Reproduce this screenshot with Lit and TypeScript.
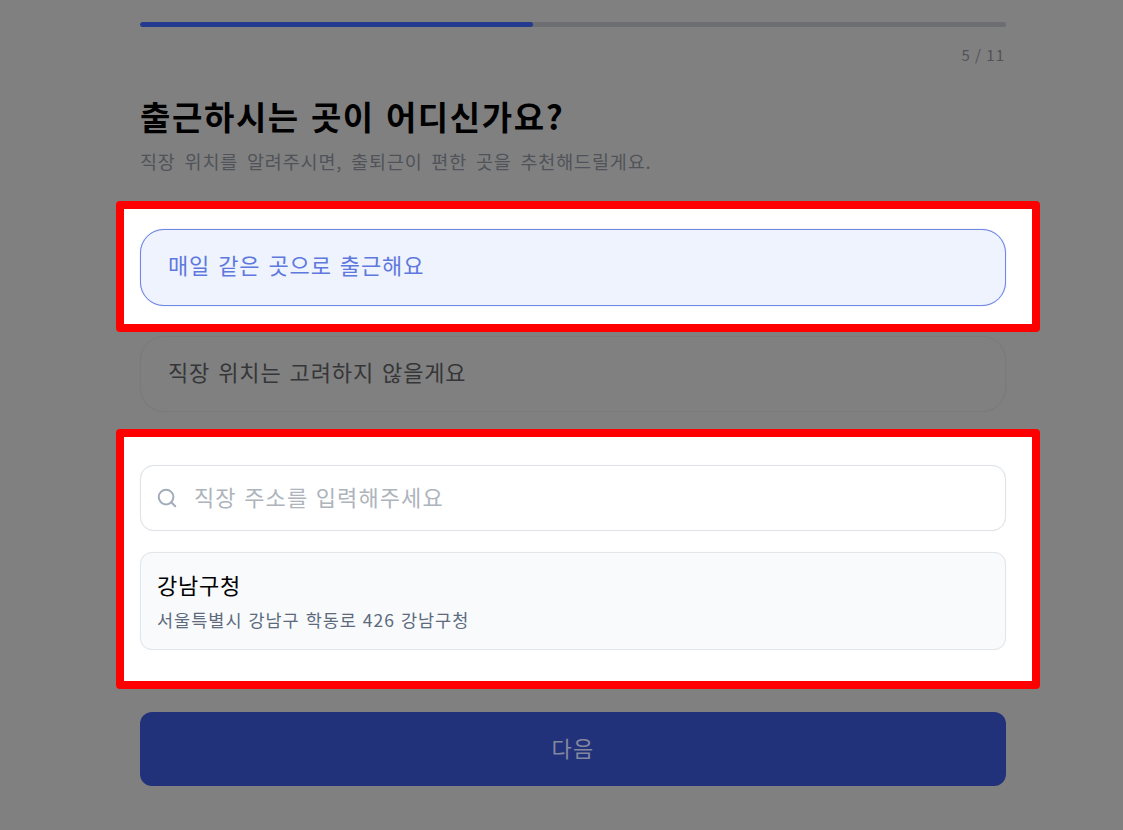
import { LitElement, html, css } from "lit";
import { customElement } from "lit/decorators.js";

@customElement("app-root")
export class AppRoot extends LitElement {
  static styles = css`
    :host {
      display: block;
      width: 1123px;
      height: 830px;
      overflow: hidden;
      background: #808080;
      font-family: "Noto Sans CJK KR", "Noto Sans", sans-serif;
    }
    .page {
      width: 866px;
      margin-left: 140px;
      padding-top: 22px;
      display: flex;
      flex-direction: column;
    }
    .track {
      height: 5px;
      border-radius: 3px;
      background: #6c6e71;
      overflow: hidden;
    }
    .fill {
      height: 100%;
      border-radius: 3px;
      background: #233a8e;
    }
    .count {
      margin-top: 17px;
      padding-right: 1px;
      height: 22px;
      line-height: 22px;
      text-align: right;
      font-size: 15px;
      letter-spacing: 1px;
      color: #505256;
    }
    h1 {
      margin: 28px 0 0;
      height: 44px;
      line-height: 44px;
      font-size: 33px;
      font-weight: 700;
      letter-spacing: 1.6px;
      word-spacing: 2px;
      color: #000;
    }
    .sub {
      margin: 10px 0 0;
      height: 26px;
      line-height: 26px;
      font-size: 18.5px;
      letter-spacing: 0.85px;
      word-spacing: 3.8px;
      color: #505359;
    }
    .mark {
      margin: 0 -34px 0 -24px;
      border: 8px solid #f00;
      border-radius: 4px;
      background: #fff;
      padding: 20px 26px 18px 16px;
    }
    .first { margin-top: 27px; }
    .second { margin-top: 17px; padding: 28px 26px 31px 16px; }
    .option {
      box-sizing: border-box;
      height: 77px;
      display: flex;
      align-items: center;
      padding: 0 27px 7px;
      border: 1px solid #6f87e3;
      box-shadow: 0 0 1px #8da0ea;
      border-radius: 24px;
      background: #eef3fe;
      color: #5f78de;
      font-size: 22px;
      letter-spacing: 0.85px;
      word-spacing: 2.3px;
    }
    .plain {
      margin-top: 4px;
      height: 76px;
      border-color: #7a7a7a;
      box-shadow: 0 0 1px #7c7c7c;
      background: #808080;
      color: #353638;
    }
    .search {
      box-sizing: border-box;
      height: 66px;
      display: flex;
      align-items: center;
      gap: 16px;
      padding: 0 15px;
      border: 1px solid #dfe3e8;
      box-shadow: 0 0 1px #e6e9ed;
      border-radius: 14px;
      background: #fff;
    }
    .search svg { flex: none; }
    .search span {
      margin-top: -4px;
      font-size: 22px;
      letter-spacing: 1.1px;
      word-spacing: 1.5px;
      color: #aeb4bc;
    }
    .result {
      box-sizing: border-box;
      height: 98px;
      margin-top: 21px;
      padding: 16px 16px;
      border: 1px solid #e2e6eb;
      box-shadow: 0 0 1px #e8ebef;
      border-radius: 12px;
      background: #f8fafc;
    }
    .name {
      height: 30px;
      line-height: 30px;
      font-size: 22px;
      letter-spacing: 0.8px;
      color: #000;
    }
    .addr {
      height: 26px;
      margin-top: 8px;
      line-height: 26px;
      font-size: 17.5px;
      letter-spacing: 1px;
      word-spacing: 1px;
      color: #5d6a7c;
    }
    .next {
      margin-top: 23px;
      height: 74px;
      padding: 0 0 4px;
      border: 0;
      border-radius: 12px;
      background: #21317a;
      color: #83889f;
      font: inherit;
      font-size: 22px;
      letter-spacing: 1.2px;
    }
  `;

  render() {
    return html`
      <div class="page">
        <div class="track"><div class="fill" style="width: 45.4%"></div></div>
        <div class="count">5 / 11</div>
        <h1>출근하시는 곳이 어디신가요?</h1>
        <p class="sub">직장 위치를 알려주시면, 출퇴근이 편한 곳을 추천해드릴게요.</p>
        <div class="mark first">
          <div class="option">매일 같은 곳으로 출근해요</div>
        </div>
        <div class="option plain">직장 위치는 고려하지 않을게요</div>
        <div class="mark second">
          <div class="search">
            <svg width="22" height="22" viewBox="0 0 24 24" fill="none" stroke="#a3adba" stroke-width="2.2" stroke-linecap="round">
              <circle cx="11" cy="11" r="8"></circle>
              <path d="M21 21l-4.3-4.3"></path>
            </svg>
            <span>직장 주소를 입력해주세요</span>
          </div>
          <div class="result">
            <div class="name">강남구청</div>
            <div class="addr">서울특별시 강남구 학동로 426 강남구청</div>
          </div>
        </div>
        <button class="next">다음</button>
      </div>
    `;
  }
}
